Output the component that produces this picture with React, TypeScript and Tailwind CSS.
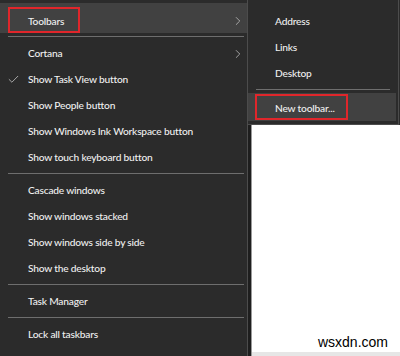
import { Check, ChevronRight } from 'lucide-react'

type Entry = { label: string; chevron?: boolean; checked?: boolean } | 'sep'

const mainItems: Entry[] = [
  { label: 'Cortana', chevron: true },
  { label: 'Show Task View button', checked: true },
  { label: 'Show People button' },
  { label: 'Show Windows Ink Workspace button' },
  { label: 'Show touch keyboard button' },
  'sep',
  { label: 'Cascade windows' },
  { label: 'Show windows stacked' },
  { label: 'Show windows side by side' },
  { label: 'Show the desktop' },
  'sep',
  { label: 'Task Manager' },
  'sep',
  { label: 'Lock all taskbars' },
]

const subItems = ['Address', 'Links', 'Desktop']

function Separator({ className = '' }: { className?: string }) {
  return (
    <div className={`h-[7px] flex items-center ${className}`}>
      <div className="h-px w-full bg-[#6e6e6e]" />
    </div>
  )
}

function MenuRow({ label, chevron, checked }: { label: string; chevron?: boolean; checked?: boolean }) {
  return (
    <div className="relative h-[26px] flex items-center pl-[28px] pt-px">
      {checked && <Check className="absolute left-[7px] w-[13px] h-[13px] text-[#d8d8d8]" strokeWidth={1.3} />}
      <span>{label}</span>
      {chevron && (
        <ChevronRight className="absolute right-[2px] w-[14px] h-[14px] text-[#cfcfcf]" strokeWidth={1.2} />
      )}
    </div>
  )
}

export default function App() {
  return (
    <div
      className="w-[400px] h-[356px] overflow-hidden flex bg-[#2b2b2b] text-[10.2px] font-medium tracking-[-0.2px] leading-none text-[#f0f0f0]"
      style={{ fontFamily: 'Lato, "Open Sans", sans-serif' }}
    >
      {/* Main context menu */}
      <div className="w-[248px] shrink-0 border-r border-[#4c4c4c] pt-[3px]">
        <div className="relative h-[30px] bg-[#414141] flex items-center pl-[28px] pt-[6px]">
          <div className="absolute left-[8px] top-[4px] w-[72px] h-[26px] border-2 border-[#e0262b]" />
          <span>Toolbars</span>
          <ChevronRight className="absolute right-[2px] top-[11px] w-[14px] h-[14px] text-[#cfcfcf]" strokeWidth={1.2} />
        </div>
        <Separator className="mx-[8px] mr-[3px]" />
        {mainItems.map((item, i) =>
          item === 'sep' ? (
            <Separator key={i} className="ml-[8px] mr-[3px]" />
          ) : (
            <MenuRow key={i} {...item} />
          ),
        )}
      </div>

      {/* Right side: submenu over white page */}
      <div className="flex-1 flex flex-col">
        <div className="h-[125px] w-[151px] shrink-0 bg-[#2b2b2b] border-r border-b border-[#4c4c4c] pt-[8px]">
          {subItems.map((s) => (
            <div key={s} className="h-[26px] flex items-center pl-[27px]">
              {s}
            </div>
          ))}
          <Separator className="ml-[8px] mr-[8px]" />
          <div className="relative h-[28px] bg-[#414141] flex items-center pl-[27px] pt-[2px] mr-[2px]">
            <div className="absolute left-[7px] top-[1px] w-[93px] h-[26px] border-2 border-[#e0262b]" />
            <span>New toolbar...</span>
          </div>
        </div>
        <div className="flex-1 flex">
          <div className="w-[3px] bg-[#1e1e1e]" />
          <div className="w-px bg-[#9a9a9a]" />
          <div className="flex-1 flex flex-col bg-white">
            <div className="flex-1 flex items-end justify-end pr-[12px] pb-[3px]">
              <span
                className="text-[14px] font-normal tracking-normal text-black leading-none"
                style={{ fontFamily: '"Liberation Sans", Arial, sans-serif' }}
              >
                wsxdn.com
              </span>
            </div>
            <div className="h-[4px] bg-[#e6e6e6]" />
          </div>
        </div>
      </div>
    </div>
  )
}
